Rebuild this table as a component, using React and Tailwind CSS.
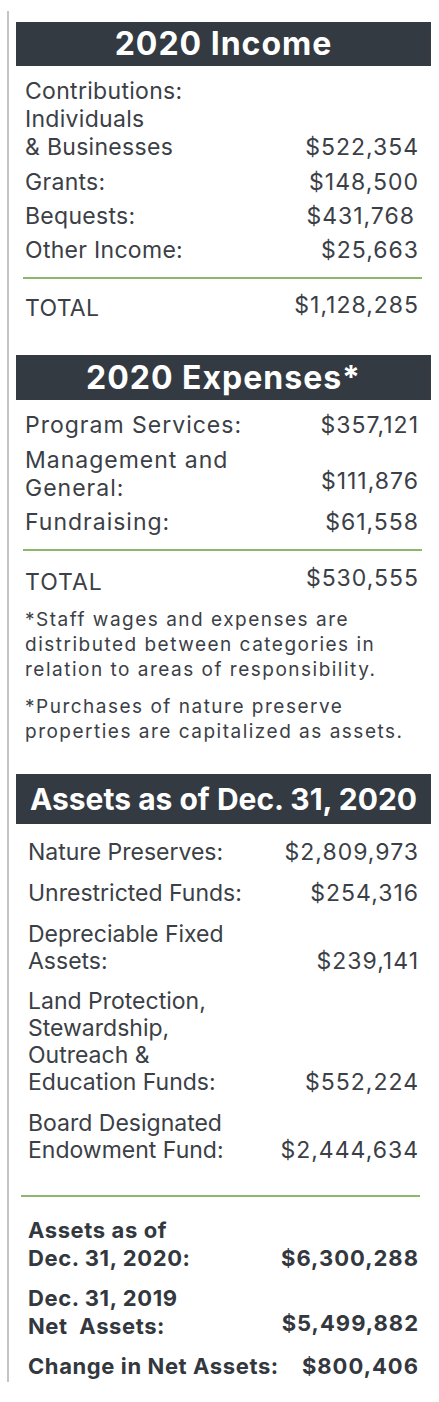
const font = { fontFamily: 'Inter, "Noto Sans", sans-serif' }

function Header({ children, className = '' }) {
  return (
    <div className={`bg-[#333a42] text-white font-bold text-center ${className}`}>
      {children}
    </div>
  )
}

function Row({ label, value, className = '', valueClass = '' }) {
  return (
    <div className={`flex justify-between items-end ${className}`}>
      <div>{label}</div>
      <div className={`tracking-[1px] -mr-[1px] ${valueClass}`}>{value}</div>
    </div>
  )
}

function Rule({ className = '' }) {
  return <div className={`h-[2px] bg-[#8cb86c] ${className}`} />
}

export default function App() {
  return (
    <div className="w-[439px] h-[1402px] bg-white pt-[11px] pl-[7px]" style={font}>
      <div className="border-l-2 border-[#c4c4c4] pl-[7px] w-[424px] pt-[11px] pb-[2px] text-[#3b4046]">
        {/* Income */}
        <Header className="h-[44px] leading-[44px] text-[32px] tracking-[1px]">2020 Income</Header>
        <div className="pl-[9px] pr-[13px] text-[23px] leading-[28px] tracking-[0.3px]">
          <Row
            className="mt-[11px]"
            label={<>Contributions:<br />Individuals<br />&amp; Businesses</>}
            value="$522,354"
          />
          <Row className="mt-[7px]" label="Grants:" value="$148,500" />
          <Row className="mt-[6px]" label="Bequests:" value="$431,768" valueClass="mr-[3px]" />
          <Row className="mt-[6px]" label="Other Income:" value="$25,663" />
        </div>
        <Rule className="mt-[13px] ml-[7px] mr-[9px]" />
        <div className="pl-[9px] pr-[13px] text-[23px] leading-[28px] tracking-[0.3px]">
          <Row className="mt-[12px]" label="TOTAL" value="$1,128,285" valueClass="mb-[3px]" />
        </div>

        {/* Expenses */}
        <Header className="mt-[33px] h-[45px] leading-[45px] text-[32px] tracking-[1px]">2020 Expenses*</Header>
        <div className="pl-[9px] pr-[13px] text-[23px] leading-[28px] tracking-[1px]">
          <Row className="mt-[11px]" label="Program Services:" value="$357,121" />
          <Row
            className="mt-[7px]"
            label={<>Management and<br />General:</>}
            value="$111,876"
            valueClass="mb-[7px]"
          />
          <Row className="mt-[6px]" label="Fundraising:" value="$61,558" />
        </div>
        <Rule className="mt-[13px] ml-[7px] mr-[9px]" />
        <div className="pl-[9px] pr-[13px] text-[23px] leading-[28px] tracking-[1px]">
          <Row className="mt-[13px]" label="TOTAL" value="$530,555" valueClass="mb-[4px]" />
        </div>
        <div className="pl-[9px] pr-[13px] text-[19px] leading-[25px] tracking-[1.5px]">
          <p className="mt-[11px]">
            *Staff wages and expenses are<br />distributed between categories in<br />relation to areas of responsibility.
          </p>
          <p className="mt-[12px]">
            *Purchases of nature preserve<br />properties are capitalized as assets.
          </p>
        </div>

        {/* Assets */}
        <Header className="mt-[30px] h-[50px] leading-[50px] text-[30px]">Assets as of Dec. 31, 2020</Header>
        <div className="pl-[12px] pr-[13px] text-[23px] leading-[27px]">
          <Row className="mt-[15px]" label="Nature Preserves:" value="$2,809,973" valueClass="tracking-[1.5px]" />
          <Row className="mt-[14px]" label="Unrestricted Funds:" value="$254,316" />
          <Row className="mt-[14px]" label={<>Depreciable Fixed<br />Assets:</>} value="$239,141" />
          <Row
            className="mt-[13px]"
            label={<>Land Protection,<br />Stewardship,<br />Outreach &amp;<br />Education Funds:</>}
            value="$552,224"
          />
          <Row
            className="mt-[14px]"
            label={<>Board Designated<br />Endowment Fund:</>}
            value="$2,444,634"
            valueClass="tracking-[1.5px]"
          />
        </div>
        <Rule className="mt-[31px] ml-[5px] mr-[11px]" />
        <div className="pl-[12px] pr-[13px] text-[22px] leading-[28px] font-bold text-[#33383e] tracking-[0.6px]">
          <Row className="mt-[19px]" label={<>Assets as of<br />Dec. 31, 2020:</>} value="$6,300,288" valueClass="tracking-[1.5px]" />
          <Row
            className="mt-[12px]"
            label={<>Dec. 31, 2019<br />Net&nbsp; Assets:</>}
            value="$5,499,882"
            valueClass="mb-[3px] tracking-[1.5px]"
          />
          <Row className="mt-[12px]" label="Change in Net Assets:" value="$800,406" valueClass="tracking-[1.5px]" />
        </div>
      </div>
    </div>
  )
}
